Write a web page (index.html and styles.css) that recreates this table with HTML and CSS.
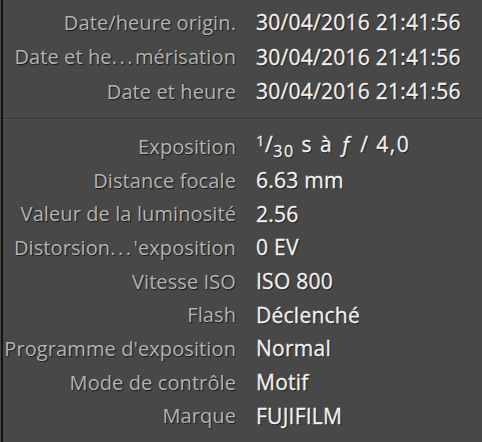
FILE: index.html
```html
<!DOCTYPE html>
<html lang="fr">
<head>
<meta charset="utf-8">
<link rel="stylesheet" href="styles.css">
</head>
<body>
<div class="panel">
  <div class="section first">
    <div class="row"><span class="label">Date/heure origin.</span><span class="value">30/04/2016 21:41:56</span></div>
    <div class="row"><span class="label">Date et he<span class="ell">...</span>mérisation</span><span class="value">30/04/2016 21:41:56</span></div>
    <div class="row"><span class="label">Date et heure</span><span class="value">30/04/2016 21:41:56</span></div>
  </div>
  <div class="divider"></div>
  <div class="section second">
    <div class="row"><span class="label">Exposition</span><span class="value expo"><span class="num">1</span><span class="slash">/</span><span class="den">30</span> s à <span class="fnum">ƒ</span> / 4,0</span></div>
    <div class="row"><span class="label">Distance focale</span><span class="value">6.63 mm</span></div>
    <div class="row"><span class="label">Valeur de la luminosité</span><span class="value">2.56</span></div>
    <div class="row"><span class="label">Distorsion<span class="ell">...</span>'exposition</span><span class="value">0 EV</span></div>
    <div class="row"><span class="label">Vitesse ISO</span><span class="value">ISO 800</span></div>
    <div class="row"><span class="label">Flash</span><span class="value">Déclenché</span></div>
    <div class="row"><span class="label">Programme d'exposition</span><span class="value">Normal</span></div>
    <div class="row"><span class="label">Mode de contrôle</span><span class="value">Motif</span></div>
    <div class="row"><span class="label">Marque</span><span class="value">FUJIFILM</span></div>
  </div>
</div>
</body>
</html>
```
FILE: styles.css
```css
html, body {
  margin: 0;
  padding: 0;
  background: #484848;
  height: 100%;
}
body {
  padding-left: 1px;
  box-sizing: border-box;
}
.panel {
  border-left: 2px solid #141414;
  height: 100%;
  box-sizing: border-box;
  font-family: "Open Sans", "DejaVu Sans", sans-serif;
  font-size: 20px;
  text-shadow: 1px 1px 1px #1a1a1a;
}
.section.first {
  padding-top: 5px;
}
.section.second {
  padding-top: 10px;
}
.divider {
  margin-top: 9px;
  height: 1px;
  background: #363636;
  border-bottom: 1px solid #505050;
}
.row {
  display: grid;
  grid-template-columns: 233px 1fr;
  column-gap: 20px;
  height: 34.5px;
  align-items: center;
  white-space: nowrap;
}
.second .row {
  height: 33.7px;
}
.label {
  text-align: right;
  color: #b3b3b3;
  letter-spacing: 0.1px;
  overflow: hidden;
}
.ell {
  letter-spacing: 2.5px;
}
.value {
  color: #f0f0f0;
  font-size: 21px;
  letter-spacing: 0.25px;
  -webkit-text-stroke: 0.3px #f0f0f0;
}
.value.expo {
  letter-spacing: 1.5px;
}
.num {
  font-size: 15px;
  vertical-align: 6px;
}
.slash {
  margin: 0 -1px;
}
.den {
  font-size: 16px;
  vertical-align: -5px;
}
.fnum {
  font-style: italic;
}
```
